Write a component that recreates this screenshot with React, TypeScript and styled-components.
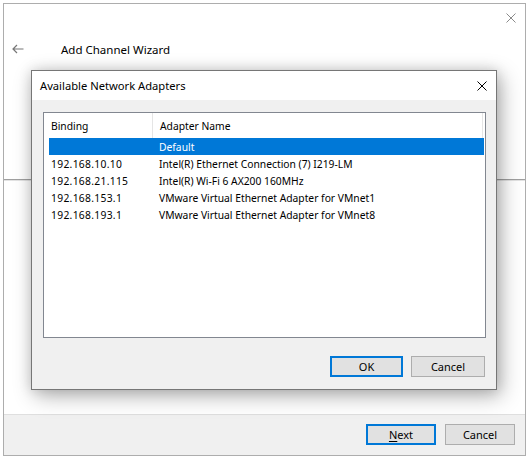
import styled, { createGlobalStyle } from "styled-components";

const GlobalStyle = createGlobalStyle`
  html, body {
    margin: 0;
    padding: 0;
    background: #ffffff;
  }
  body {
    font-family: "Noto Sans", "Open Sans", sans-serif;
    color: #000;
  }
  * {
    box-sizing: border-box;
  }
`;

const Screen = styled.div`
  position: relative;
  width: 528px;
  height: 456px;
  padding: 3px 2px 0 3px;
  overflow: hidden;
`;

const Wizard = styled.div`
  width: 523px;
  height: 453px;
  border: 1px solid #adadad;
  background: #ffffff;
  display: flex;
  flex-direction: column;
`;

const TopBar = styled.div`
  height: 28px;
  display: flex;
  justify-content: flex-end;
  padding: 9px 9px 0 0;
`;

const HeaderRow = styled.div`
  height: 34px;
  display: flex;
  align-items: center;
  padding-left: 8px;
`;

const WizardTitle = styled.span`
  margin-left: 37px;
  font-size: 11.5px;
  color: #000;
`;

const Separator = styled.div`
  margin-top: 113px;
  border-top: 1px solid #a0a0a0;
  border-bottom: 1px solid #e3e3e3;
`;

const Spacer = styled.div`
  flex: 1;
`;

const Footer = styled.div`
  height: 41px;
  border-top: 1px solid #dfdfdf;
  background: #f0f0f0;
  display: flex;
  justify-content: flex-end;
  align-items: flex-start;
  gap: 9px;
  padding: 9px 10px 0 0;
`;

const Button = styled.button<{ $default?: boolean; $width?: number }>`
  width: ${(p) => p.$width ?? 70}px;
  height: 21px;
  padding: 0;
  background: #e1e1e1;
  border: ${(p) => (p.$default ? "2px solid #0078d7" : "1px solid #adadad")};
  font-family: inherit;
  font-size: 11px;
  color: #000;
  display: flex;
  align-items: center;
  justify-content: center;
  line-height: 1;
`;

const Mnemonic = styled.span`
  text-decoration: underline;
  text-underline-offset: 2px;
`;

const Dialog = styled.div`
  position: absolute;
  left: 31px;
  top: 70px;
  width: 466px;
  height: 320px;
  border: 1px solid #767676;
  background: #f0f0f0;
  display: flex;
  flex-direction: column;
  box-shadow: 4px 6px 20px rgba(0, 0, 0, 0.3), 0 0 12px rgba(0, 0, 0, 0.14);
`;

const DialogTitleBar = styled.div`
  height: 29px;
  background: #ffffff;
  display: flex;
  align-items: center;
  justify-content: space-between;
  padding: 0 9px 0 8px;
`;

const DialogTitle = styled.span`
  font-size: 11.2px;
`;

const DialogBody = styled.div`
  flex: 1;
  display: flex;
  flex-direction: column;
  padding: 12px 10px 12px 11px;
`;

const ListBox = styled.div`
  height: 226px;
  border: 1px solid #828790;
  background: #ffffff;
  font-size: 10.3px;
`;

const ListHeader = styled.div`
  height: 25px;
  width: 439px;
  display: grid;
  grid-template-columns: 109px 1fr;
`;

const HeaderCell = styled.div`
  display: flex;
  align-items: center;
  padding-left: 7px;
  border-right: 1px solid #e5e5e5;
`;

const Rows = styled.div`
  padding-left: 5px;
  padding-right: 1px;
`;

const Row = styled.div<{ $selected?: boolean }>`
  height: 17px;
  display: grid;
  grid-template-columns: 108px 1fr;
  align-items: center;
  background: ${(p) => (p.$selected ? "#0078d7" : "transparent")};
  color: ${(p) => (p.$selected ? "#ffffff" : "#000000")};
`;

const Cell = styled.span<{ $spaced?: boolean }>`
  padding-left: 2px;
  white-space: nowrap;
  letter-spacing: ${(p) => (p.$spaced ? "0.3px" : "0")};
`;

const ButtonRow = styled.div`
  margin-top: 18px;
  display: flex;
  justify-content: flex-end;
  gap: 8px;
  padding-right: 1px;
`;

const CloseIcon = ({ color, size }: { color: string; size: number }) => (
  <svg width={size} height={size} viewBox="0 0 10 10">
    <path d="M0.5 0.5L9.5 9.5M9.5 0.5L0.5 9.5" stroke={color} strokeWidth="1" />
  </svg>
);

const BackArrow = () => (
  <svg width="12" height="10" viewBox="0 0 12 10">
    <path d="M11.5 5H1.2M5 1L1 5L5 9" stroke="#777" strokeWidth="1.2" fill="none" />
  </svg>
);

const adapters = [
  { binding: "", name: "Default" },
  { binding: "192.168.10.10", name: "Intel(R) Ethernet Connection (7) I219-LM" },
  { binding: "192.168.21.115", name: "Intel(R) Wi-Fi 6 AX200 160MHz" },
  { binding: "192.168.153.1", name: "VMware Virtual Ethernet Adapter for VMnet1" },
  { binding: "192.168.193.1", name: "VMware Virtual Ethernet Adapter for VMnet8" },
];

export default function App() {
  return (
    <>
      <GlobalStyle />
      <Screen>
        <Wizard>
          <TopBar>
            <CloseIcon color="#8a8a8a" size={10} />
          </TopBar>
          <HeaderRow>
            <BackArrow />
            <WizardTitle>Add Channel Wizard</WizardTitle>
          </HeaderRow>
          <Separator />
          <Spacer />
          <Footer>
            <Button $default>
              <Mnemonic>N</Mnemonic>ext
            </Button>
            <Button>Cancel</Button>
          </Footer>
        </Wizard>

        <Dialog>
          <DialogTitleBar>
            <DialogTitle>Available Network Adapters</DialogTitle>
            <CloseIcon color="#000" size={10} />
          </DialogTitleBar>
          <DialogBody>
            <ListBox>
              <ListHeader>
                <HeaderCell>Binding</HeaderCell>
                <HeaderCell>Adapter Name</HeaderCell>
              </ListHeader>
              <Rows>
                {adapters.map((a, i) => (
                  <Row key={a.name} $selected={i === 0}>
                    <Cell $spaced>{a.binding}</Cell>
                    <Cell>{a.name}</Cell>
                  </Row>
                ))}
              </Rows>
            </ListBox>
            <ButtonRow>
              <Button $default $width={73}>
                OK
              </Button>
              <Button $width={74}>Cancel</Button>
            </ButtonRow>
          </DialogBody>
        </Dialog>
      </Screen>
    </>
  );
}
